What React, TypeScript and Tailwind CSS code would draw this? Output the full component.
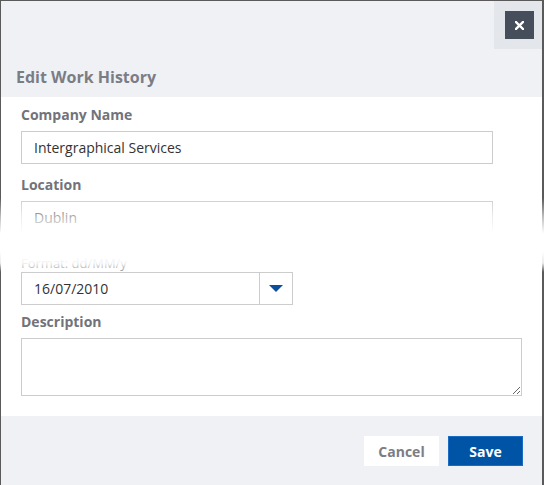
import React from "react";

const FONT = { fontFamily: '"Open Sans", "Noto Sans", Arial, sans-serif' };

function Label({ children }: { children: React.ReactNode }) {
  return (
    <div className="text-[14px] font-bold leading-5 text-[#72737a]">{children}</div>
  );
}

export default function App() {
  return (
    <div className="relative w-[544px] h-[485px] overflow-hidden bg-[#5a5a5a]" style={FONT}>
      <div className="w-[544px] h-[485px] border-l border-t border-r-2 border-[#5a5a5a] bg-white flex flex-col">
        {/* header */}
        <div className="relative h-[96px] shrink-0 bg-[#eff1f5] flex items-end pl-[15px] pb-[9px]">
          <h2 className="text-[16px] font-bold leading-[22px] text-[#7b7d85]">Edit Work History</h2>
          <div className="absolute top-0 right-0 w-[48px] h-[48px] bg-[#e3e6ea] flex items-start justify-end pt-[10px] pr-[8px]">
            <button className="w-[29px] h-[28px] bg-[#474e5b] flex items-center justify-center">
              <svg width="9" height="9" viewBox="0 0 9 9">
                <path d="M1 1 L8 8 M8 1 L1 8" stroke="#fff" strokeWidth="2.4" strokeLinecap="square" />
              </svg>
            </button>
          </div>
        </div>

        {/* body */}
        <div className="flex-1 px-5 pt-2 pb-5 flex flex-col">
          <Label>Company Name</Label>
          <div className="mt-[6px] w-[472px] h-[33px] border border-[#cccccc] flex items-center px-3 text-[14px] text-[#333333]">
            Intergraphical Services
          </div>

          <div className="mt-[11px]">
            <Label>Location</Label>
          </div>
          <div className="mt-[6px] w-[472px] h-[33px] border border-[#cccccc] flex items-center px-3 text-[14px] text-[#333333]">
            Dublin
          </div>

          <div className="mt-[20px] text-[13px] leading-[18px] text-[#8a8c94]">Format: dd/MM/y</div>
          <div className="w-[272px] h-[33px] border border-[#cccccc] flex">
            <div className="flex-1 flex items-center px-3 text-[14px] text-[#333333]">16/07/2010</div>
            <div className="w-[33px] border-l border-[#cccccc] flex items-center justify-center">
              <svg width="14" height="8" viewBox="0 0 14 8">
                <path d="M0 0 L14 0 L7 7 Z" fill="#0b4f9c" />
              </svg>
            </div>
          </div>

          <div className="mt-[7px]">
            <Label>Description</Label>
          </div>
          <textarea className="mt-[6px] w-full h-[58px] border border-[#cccccc] resize-y outline-none" />
        </div>

        {/* footer */}
        <div className="h-[70px] shrink-0 bg-[#eff1f5] flex justify-end items-start pt-[20px] pr-[19px] gap-[9px]">
          <button className="w-[75px] h-[30px] bg-white text-[14px] font-bold text-[#7b7d85]">Cancel</button>
          <button className="w-[75px] h-[30px] bg-[#0054a6] border border-[#1a6bc4] text-[14px] font-bold text-white">
            Save
          </button>
        </div>
      </div>

      <div className="pointer-events-none absolute left-0 right-0 top-[198px] h-[74px] bg-[linear-gradient(to_bottom,rgba(255,255,255,0)_0%,rgba(255,255,255,0.62)_26%,#ffffff_48%,#ffffff_72%,rgba(255,255,255,0.88)_88%,rgba(255,255,255,0)_100%)]" />
    </div>
  );
}
